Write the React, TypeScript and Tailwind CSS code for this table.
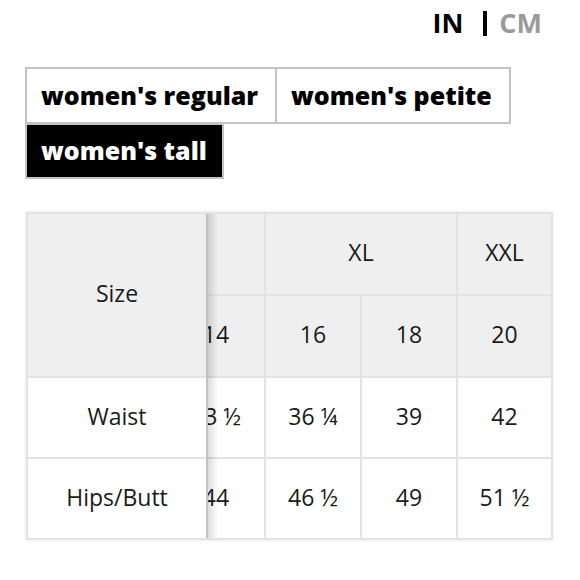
import React from "react";

const F = { fontFamily: '"Open Sans", "Noto Sans", sans-serif' };

function Cell({ children, className = "" }: { children?: React.ReactNode; className?: string }) {
  return (
    <div className={"flex items-center justify-center pb-[3px] text-[23px] text-[#1a1a1a] " + className}>{children}</div>
  );
}

function Clipped({ children, className = "" }: { children?: React.ReactNode; className?: string }) {
  return (
    <div className={"overflow-hidden " + className}>
      <div className="ml-[-40px] flex h-full w-[96px] shrink-0 items-center justify-center pb-[3px] text-[23px] text-[#1a1a1a]">{children}</div>
    </div>
  );
}

export default function App() {
  return (
    <div className="relative h-[580px] w-[580px] bg-white" style={F}>
      <div className="flex items-center justify-end pr-[38px] pt-[6px] text-[27px] font-bold leading-[34px]">
        <span className="text-black">IN</span>
        <span className="ml-[20px] mr-[12px] inline-block h-[25px] w-[4px] bg-black" />
        <span className="text-[#9a9a9a]">CM</span>
      </div>

      <div className="ml-[25px] mt-[27px] flex flex-col">
        <div className="flex">
          <div className="flex h-[57px] w-[252px] items-center border-2 border-[#c4c4c4] pl-[14px] text-[25px] font-extrabold text-black">
            women's regular
          </div>
          <div className="ml-[-2px] flex h-[57px] w-[236px] items-center border-2 border-[#c4c4c4] pl-[14px] text-[25px] font-extrabold text-black">
            women's petite
          </div>
        </div>
        <div className="mt-[-1px] flex h-[56px] w-[199px] items-center border-2 border-[#c4c4c4] bg-black pl-[14px] text-[25px] font-extrabold text-white">
          women's tall
        </div>
      </div>

      <div className="relative ml-[26px] mt-[33px] w-[527px] shadow-[0_0_3px_rgba(0,0,0,0.12)]">
        <div className="grid grid-cols-[178px_56px_94px_94px_93px] grid-rows-[80px_80px_79px_79px] gap-[2px] border-2 border-[#e3e3e3] bg-[#e3e3e3]">
          <Cell className="row-span-2 bg-[#efefef]">Size</Cell>
          <div className="bg-[#efefef]" />
          <Cell className="col-span-2 bg-[#efefef]">XL</Cell>
          <Cell className="bg-[#efefef]">XXL</Cell>

          <Clipped className="bg-[#efefef]">14</Clipped>
          <Cell className="bg-[#efefef]">16</Cell>
          <Cell className="bg-[#efefef]">18</Cell>
          <Cell className="bg-[#efefef]">20</Cell>

          <Cell className="bg-white">Waist</Cell>
          <Clipped className="bg-white">33 ½</Clipped>
          <Cell className="bg-white">36 ¼</Cell>
          <Cell className="bg-white">39</Cell>
          <Cell className="bg-white">42</Cell>

          <Cell className="bg-white">Hips/Butt</Cell>
          <Clipped className="bg-white">44</Clipped>
          <Cell className="bg-white">46 ½</Cell>
          <Cell className="bg-white">49</Cell>
          <Cell className="bg-white">51 ½</Cell>
        </div>
        <div className="pointer-events-none absolute bottom-[2px] left-[180px] top-[2px] w-[12px] bg-gradient-to-r from-[rgba(0,0,0,0.16)] to-transparent" />
      </div>
    </div>
  );
}
